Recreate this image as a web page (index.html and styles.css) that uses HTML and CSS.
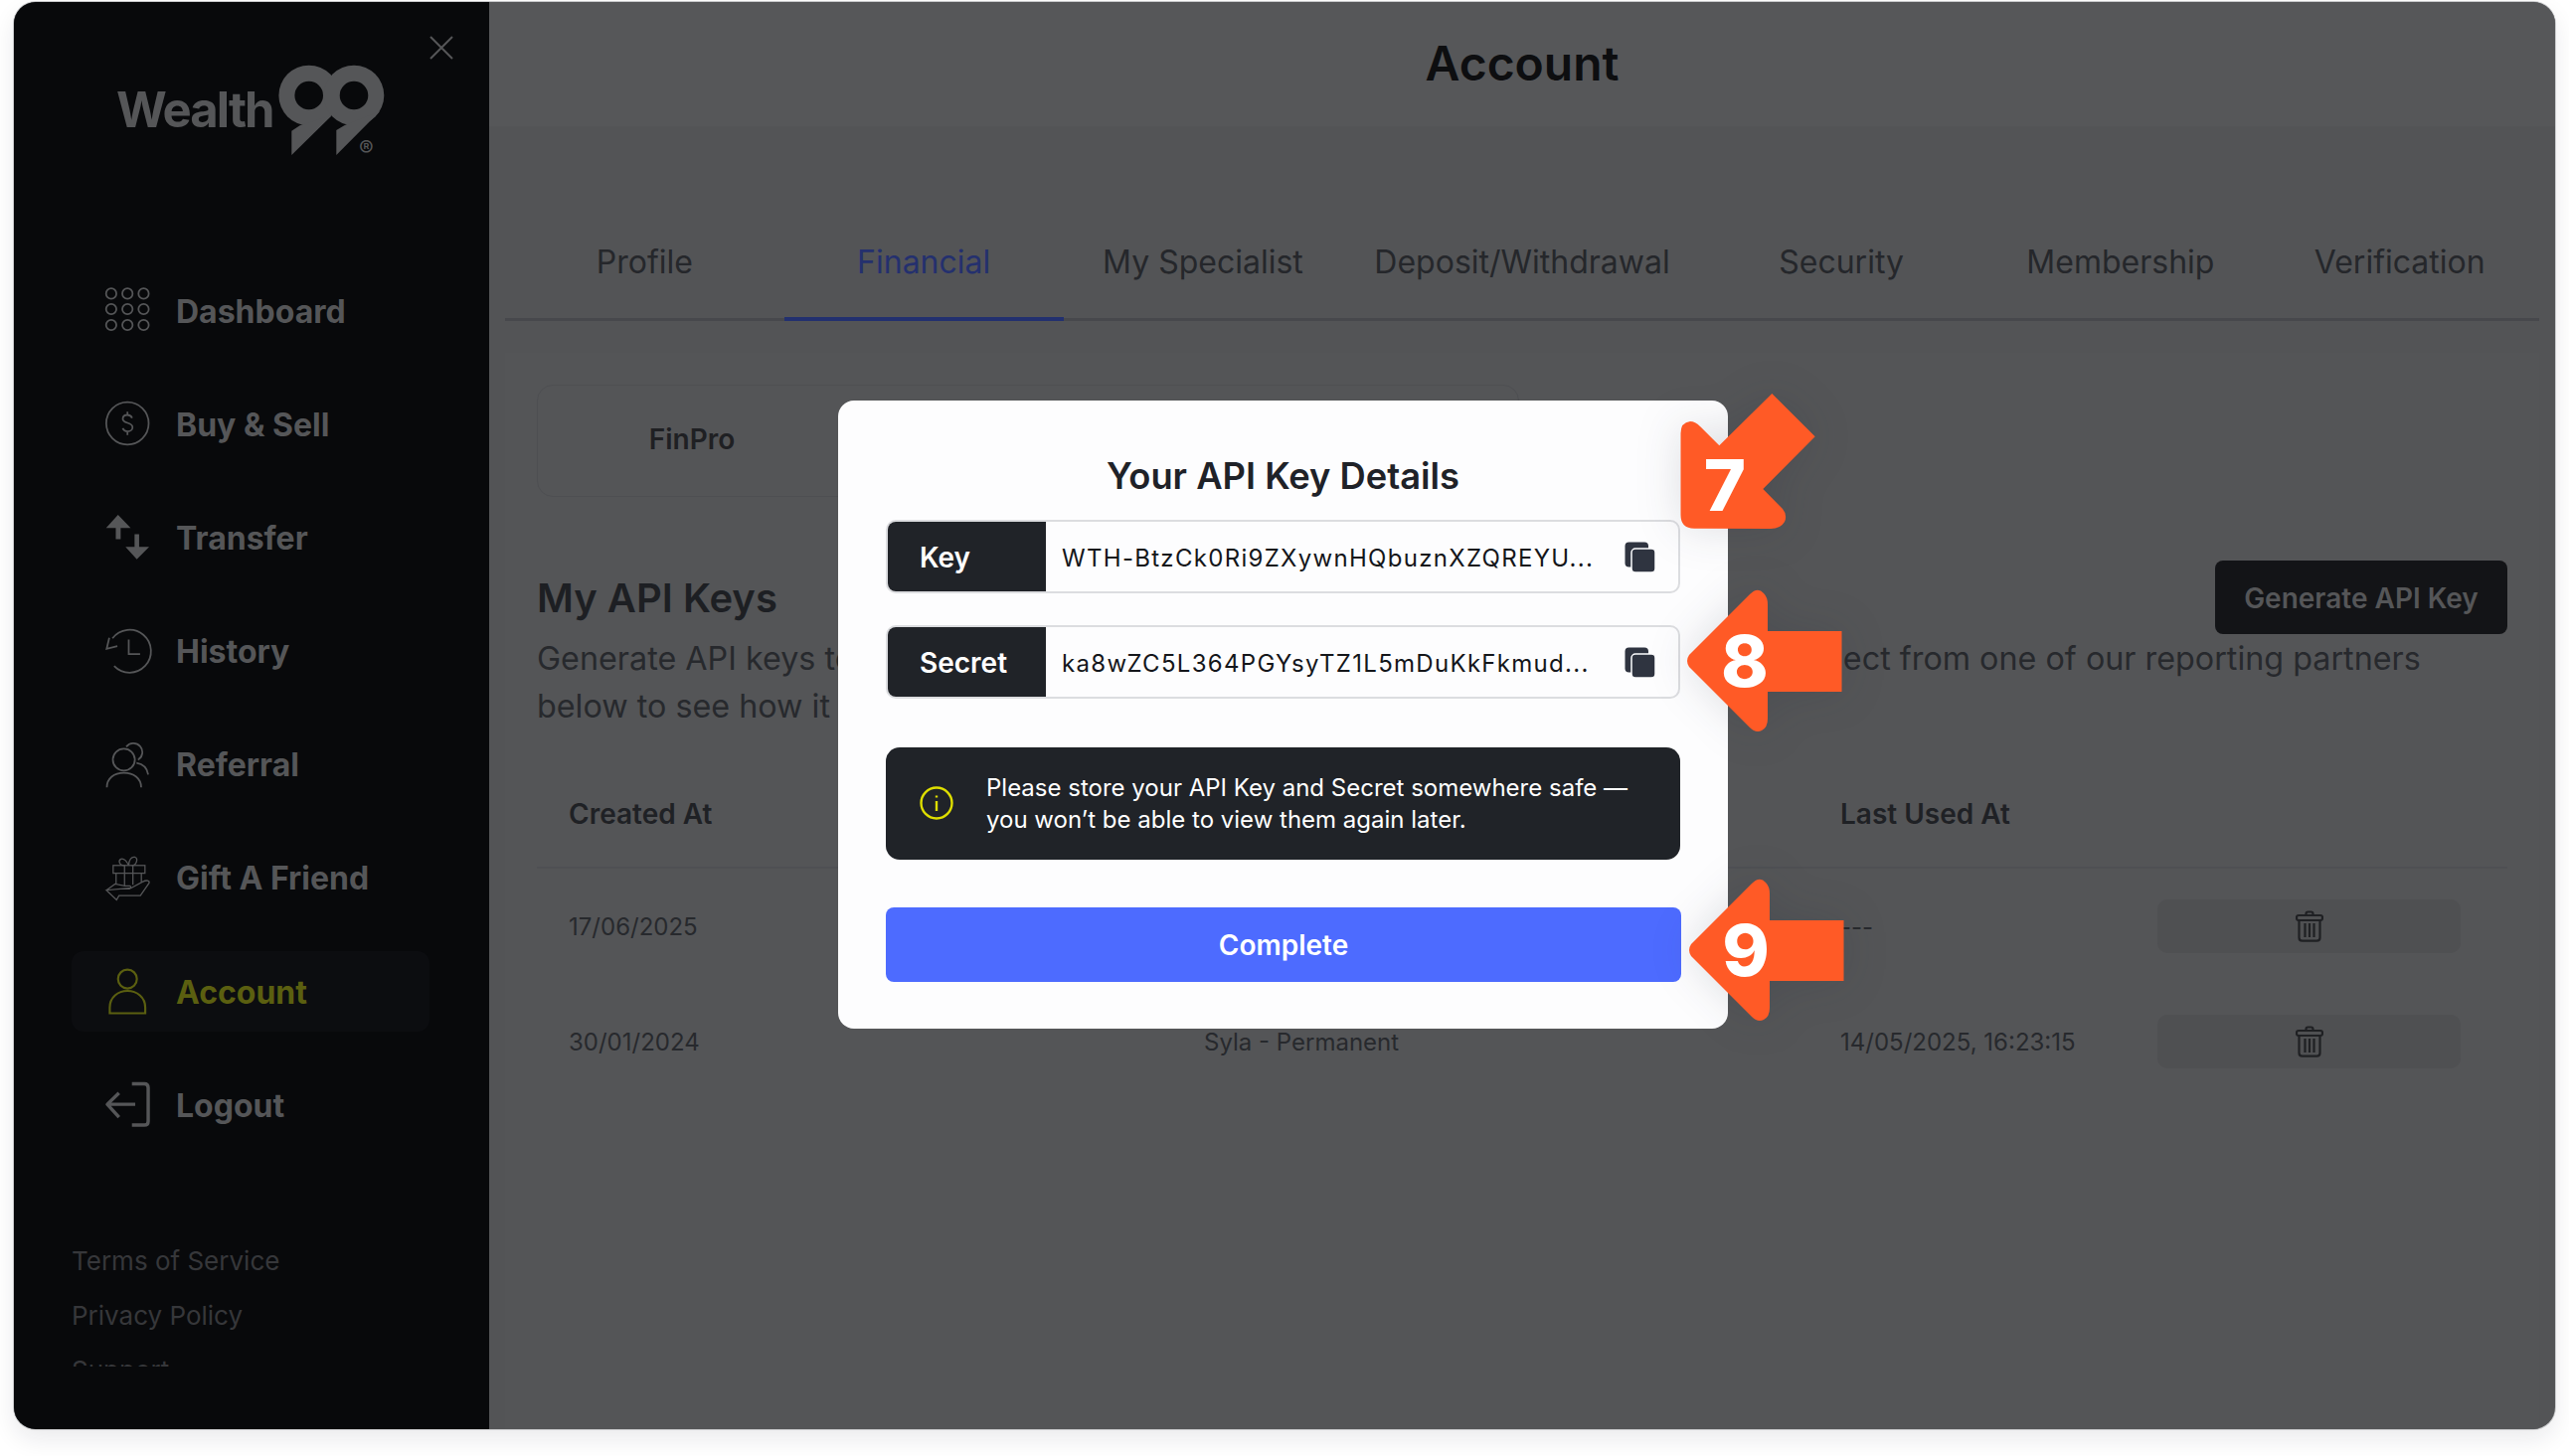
FILE: index.html
```html
<!DOCTYPE html>
<html lang="en">
<head>
<meta charset="utf-8">
<title>Account</title>
<link rel="stylesheet" href="styles.css">
</head>
<body>
<div class="stage">
  <div class="frame">
    <aside class="sidebar">
      <svg class="close" viewBox="0 0 24 24"><path d="M1 1L23 23M23 1L1 23"/></svg>
      <div class="logo">
        <span class="logo-word">Wealth</span>
        <svg class="logo-mark" viewBox="280 60 110 100">
          <circle class="m" cx="310.700" cy="96" r="30.300"/>
          <circle class="m" cx="356" cy="96" r="30.300"/>
          <path class="m" d="M302 126L293.300 131.700V156L334 116ZM346.700 126L338.300 131V156L382 112Z"/>
          <circle class="h" cx="310.700" cy="96" r="14.300"/>
          <circle class="h" cx="356" cy="96" r="14.300"/>
        </svg>
        <span class="logo-r">®</span>
      </div>
      <nav class="nav">
        <a class="nav-item"><svg class="ico" viewBox="0 0 46 46"><g class="s15"><circle cx="6" cy="5.500" r="5.300"/><circle cx="22.700" cy="5.500" r="5.300"/><circle cx="39.300" cy="5.500" r="5.300"/><circle cx="6" cy="21.500" r="5.300"/><circle cx="22.700" cy="21.500" r="5.300"/><circle cx="39.300" cy="21.500" r="5.300"/><circle cx="6" cy="37.800" r="5.300"/><circle cx="22.700" cy="37.800" r="5.300"/><circle cx="39.300" cy="37.800" r="5.300"/></g></svg><span>Dashboard</span></a>
        <a class="nav-item"><svg class="ico" viewBox="0 0 46 46"><g class="s15"><circle cx="22.700" cy="22.500" r="21.800"/><path d="M27.500 17c-.8-2-2.600-3.200-4.800-3.200-2.800 0-4.800 1.600-4.800 4 0 5.400 10 3 10 8.700 0 2.500-2.200 4.200-5 4.200-2.400 0-4.300-1.200-5.100-3.200M22.700 10.500v3.300M22.700 30.800v3.700"/></g></svg><span>Buy &amp; Sell</span></a>
        <a class="nav-item"><svg class="ico" viewBox="0 0 46 46"><path class="f" d="M.7 13.500L13 0L26 13.500H15.700V25H10.700V13.500ZM30 20H34.700V33H45L32.300 45.800L20.700 33H30Z"/></svg><span>Transfer</span></a>
        <a class="nav-item"><svg class="ico" viewBox="0 0 46 46"><g class="s15"><path d="M7.300 9.500A22 22 0 1 1 9 38"/><path d="M4 9L1.300 20.200L12.300 17.500"/><path d="M24 10.800V25.800H35.700"/></g></svg><span>History</span></a>
        <a class="nav-item"><svg class="ico" viewBox="0 0 46 46"><g class="s15"><circle cx="19" cy="17.800" r="11.300"/><path d="M21.500 4.500A9.200 9.200 0 1 1 33.500 18"/><path d="M1.500 46.200C1.500 37 9 31.200 19 31.200S36.800 37 36.800 46.200"/><path d="M32 21C38 22 43 26 44 33"/></g></svg><span>Referral</span></a>
        <a class="nav-item"><svg class="ico" viewBox="0 0 46 46"><g class="s12"><rect x="8" y="10" width="32.700" height="8"/><path d="M11 18V29M37 18V27M19.700 10V31M28.300 10V30"/><path d="M20 10C14 10 13 5 16 3.500C19 2.500 22 6 24 10C24 4 27 .5 30.500 1.500C34 3 32 10 27 10"/><path d="M1 35.500L10 29L20 31H25C26.500 31 26.500 34 25 34H18M27 33L38 27C43 24.500 45.500 25.500 45 28L36 41H14L11.500 45.500L1 35.500Z"/></g></svg><span>Gift A Friend</span></a>
        <a class="nav-item active"><svg class="ico" viewBox="0 0 46 46"><g class="s25"><circle cx="22.700" cy="10.300" r="9.700"/><path d="M4.500 45.500V39.500C4.500 29 13 22.500 22.700 22.500S41 29 41 39.500V45.500Z"/></g></svg><span>Account</span></a>
        <a class="nav-item"><svg class="ico" viewBox="0 0 46 46"><g class="s3"><path d="M30.700 22.600H3M14 11L2 22.600L14 36"/><path d="M27.300 1.500H40Q44 1.500 44 5.500V40Q44 44 40 44H27.300"/></g></svg><span>Logout</span></a>
      </nav>
      <div class="links">
        <a>Terms of Service</a>
        <a>Privacy Policy</a>
        <a>Support</a>
      </div>
    </aside>
    <main class="main">
      <header class="top"><h1>Account</h1></header>
      <div class="tabs">
        <a class="tab">Profile</a>
        <a class="tab on">Financial</a>
        <a class="tab">My Specialist</a>
        <a class="tab">Deposit/Withdrawal</a>
        <a class="tab">Security</a>
        <a class="tab">Membership</a>
        <a class="tab">Verification</a>
      </div>
      <section class="panel">
        <div class="partners"><div class="partner">FinPro</div></div>
        <div class="api-head">
          <h2>My API Keys</h2>
          <button class="gen">Generate API Key</button>
        </div>
        <p class="desc">Generate API keys to connect your account with third-party tax and portfolio tools. Select from one of our reporting partners<br>below to see how it works.</p>
        <div class="table">
          <div class="row head"><span>Created At</span><span>Name</span><span>Last Used At</span><span></span></div>
          <div class="row">
            <span>17/06/2025</span><span>FinPro - Permanent</span><span>---</span>
            <button class="del"><svg class="trash" viewBox="0 0 28 32"><use href="#trash-shape"/></svg></button>
          </div>
          <div class="row">
            <span>30/01/2024</span><span>Syla - Permanent</span><span>14/05/2025, 16:23:15</span>
            <button class="del"><svg class="trash" viewBox="0 0 28 32"><use href="#trash-shape"/></svg></button>
          </div>
        </div>
      </section>
    </main>
  </div>

  <div class="modal">
    <h3>Your API Key Details</h3>
    <div class="field">
      <div class="field-label">Key</div>
      <div class="field-value">WTH-BtzCk0Ri9ZXywnHQbuznXZQREYU...</div>
      <svg class="copy" viewBox="0 0 31 31"><use href="#copy-shape"/></svg>
    </div>
    <div class="field second">
      <div class="field-label">Secret</div>
      <div class="field-value">ka8wZC5L364PGYsyTZ1L5mDuKkFkmud...</div>
      <svg class="copy" viewBox="0 0 31 31"><use href="#copy-shape"/></svg>
    </div>
    <div class="notice">
      <svg class="info" viewBox="0 0 34 34"><circle cx="17" cy="17" r="15.500"/><path d="M17 15V25M17 9.500V11.500"/></svg>
      <p>Please store your API Key and Secret somewhere safe —<br>you won’t be able to view them again later.</p>
    </div>
    <button class="complete">Complete</button>
  </div>

  <div class="callout c7">
    <svg viewBox="1680 390 160 150"><path d="M1690.500 436Q1690.500 425 1700 424Q1705 424 1710 429L1729.300 448.300L1782.300 396L1825.700 439.300L1773.300 492L1793 512Q1798 518 1795 525Q1791 532 1781 532L1704 531.700Q1690.500 531.700 1690.500 518Z"/></svg>
    <span class="digit d7">7</span>
  </div>
  <div class="callout c8">
    <svg viewBox="1690 585 170 160"><path d="M1760 598Q1768 590 1774 597Q1778 601 1778 608V635H1852.500V696H1778V723Q1778 732 1772 735Q1766 738 1760 732L1699 671Q1695 665 1699 659Z"/></svg>
    <span class="digit d8">8</span>
  </div>
  <div class="callout c9">
    <svg viewBox="1690 585 170 160"><path d="M1760 598Q1768 590 1774 597Q1778 601 1778 608V635H1852.500V696H1778V723Q1778 732 1772 735Q1766 738 1760 732L1699 671Q1695 665 1699 659Z"/></svg>
    <span class="digit d9">9</span>
  </div>

  <svg class="defs" aria-hidden="true">
    <defs>
      <g id="trash-shape" fill="none" stroke="#1f2023" stroke-width="2.200">
        <path d="M10.500 5V3.500Q10.500 1.500 12.500 1.500H15.500Q17.500 1.500 17.500 3.500V5"/>
        <rect x="1" y="5" width="26" height="5" rx="2"/>
        <path d="M3.500 10V27.500Q3.500 30.700 6.700 30.700H21.300Q24.500 30.700 24.500 27.500V10"/>
        <path d="M9.500 13V27M14 13V27M18.500 13V27"/>
      </g>
      <g id="copy-shape">
        <rect x=".5" y=".5" width="23.500" height="25" rx="4" fill="#2f3440"/>
        <rect x="7" y="7" width="24" height="24" rx="4" fill="#2f3440" stroke="#fdfdfe" stroke-width="1.500"/>
      </g>
    </defs>
  </svg>
</div>
</body>
</html>
```

FILE: styles.css
```css
* { box-sizing: border-box; }
html, body { margin: 0; padding: 0; background: #fff; }
body { font-family: Inter, "Liberation Sans", sans-serif; overflow: hidden; }
h1, h2, h3, p { margin: 0; }
button { font-family: inherit; border: 0; padding: 0; }

.stage { position: relative; width: 2584px; height: 1465px; padding: 2px 14px 27px; }
.frame {
  display: flex; height: 100%; overflow: hidden; border-radius: 22px;
  background: #535456;
  box-shadow: 0 0 0 1px #c9cacc, 0 10px 24px rgba(20, 24, 40, .09);
}

/* sidebar */
.sidebar { position: relative; flex: 0 0 478px; background: #08090b; color: #555658; }
.close { position: absolute; left: 418px; top: 34px; width: 24px; height: 24px; }
.close path { stroke: #555658; stroke-width: 2; fill: none; }
.logo { display: flex; align-items: flex-start; height: 100px; margin: 58px 0 0 103px; position: relative; }
.logo-word { width: 163px; margin-top: 27px; font-size: 49px; line-height: 48px; font-weight: 700; letter-spacing: -1.900px; color: #555658; }
.logo-mark { width: 110px; height: 100px; }
.logo-mark .m { fill: #555658; }
.logo-mark .h { fill: #08090b; }
.logo-r { position: absolute; left: 244px; top: 77px; font-size: 22px; line-height: 24px; color: #555658; }

.nav { display: flex; flex-direction: column; gap: 33.200px; margin: 112px 0 0 58px; width: 360px; }
.nav-item { display: flex; align-items: center; gap: 26px; height: 81px; padding-left: 34px; border-radius: 12px; font-size: 32px; font-weight: 700; color: #555658; }
.nav-item span { padding-top: 1px; }
.nav-item.active { background: #0c0d10; color: #5b5f10; }
.ico { flex: 0 0 45px; width: 45px; height: 45px; overflow: visible; }
.ico .f { fill: #555658; }
.s12, .s15, .s25, .s3 { fill: none; stroke: #555658; }
.s12 { stroke-width: 1.300; }
.s15 { stroke-width: 1.800; }
.s25 { stroke-width: 2.200; stroke: #5b5f10; }
.s3 { stroke-width: 3.500; stroke-linejoin: round; }

.links { height: 134.500px; margin: 88.500px 0 0 58px; overflow: hidden; font-size: 26px; color: #36373a; }
.links a { display: block; height: 55px; line-height: 55px; }

/* main */
.main { flex: 1; min-width: 0; display: flex; flex-direction: column; }
.top { height: 125px; display: flex; align-items: center; justify-content: center; background: #565759; }
h1 { font-size: 48px; line-height: 56px; margin-top: -2px; font-weight: 600; color: #0d0e10; }
.tabs { display: flex; height: 108px; margin: 88px 16px 0; border-bottom: 3px solid #47484c; }
.tab { flex: 1 1 0; height: 108px; padding: 0 32px; line-height: 98px; text-align: center; font-size: 32px; color: #25272b; white-space: nowrap; }
.tab.on { color: #24306e; border-bottom: 4px solid #22306f; }
.panel { flex: 1; margin: 32px 16px 0; padding: 32px 32px 0 32px; background: #545557; }
.partners { width: 988px; height: 113px; border: 1px solid #4e4f52; border-radius: 16px; }
.partner { width: 310px; line-height: 109px; text-align: center; font-size: 28px; font-weight: 600; color: #1f2023; }
.api-head { display: flex; align-items: center; justify-content: space-between; height: 74px; margin-top: 64px; }
h2 { font-size: 40px; font-weight: 600; color: #1d1f23; }
.gen { width: 294px; height: 74px; padding-top: 2px; border-radius: 8px; background: #131417; color: #555658; font-size: 28px; font-weight: 600; }
.desc { padding-top: 1px; font-size: 32.300px; line-height: 48px; color: #27292d; white-space: nowrap; }
.table { margin-top: 29px; color: #27292d; font-size: 24px; }
.row { display: grid; grid-template-columns: 639px 640px 319px 305px; align-items: center; height: 116px; padding-left: 32px; }
.row.head { height: 110px; padding-top: 1px; font-size: 28px; font-weight: 600; color: #1f2125; border-bottom: 2px solid #4f5053; }
.del { display: flex; align-items: center; justify-content: center; height: 54px; background: #4f5052; border-radius: 10px; }
.trash { width: 28px; height: 32px; }

/* modal */
.modal { position: absolute; left: 843px; top: 403px; width: 895px; height: 632px; padding: 49px 48px 0 48px; background: #fdfdfe; border-radius: 16px; }
h3 { height: 54px; line-height: 55px; text-align: center; font-size: 36.300px; font-weight: 600; color: #1f2228; }
.field { display: flex; align-items: center; height: 74px; margin-top: 17px; border: 2px solid #dcdde0; border-radius: 10px; overflow: hidden; }
.field.second { margin-top: 32px; }
.field-label { display: flex; align-items: center; flex: 0 0 159px; height: 100%; padding: 2px 0 0 32px; background: #202328; color: #fff; font-size: 28px; font-weight: 600; }
.field-value { flex: 1; min-width: 0; padding: 2px 0 0 16px; font-size: 24px; letter-spacing: 1.300px; color: #14161a; white-space: nowrap; }
.copy { flex: 0 0 31px; width: 31px; height: 31px; margin-right: 23px; }
.notice { display: flex; align-items: center; height: 113px; margin-top: 49px; padding-left: 34px; border-radius: 14px; background: #202328; color: #fff; }
.info { flex: 0 0 34px; width: 34px; height: 34px; margin: -2px 33px 0 0; }
.info circle, .info path { fill: none; stroke: #dede00; stroke-width: 2.400; }
.notice p { padding-top: 1px; font-size: 24px; line-height: 32px; white-space: nowrap; }
.complete { display: block; width: 800px; height: 75px; margin-top: 48px; border-radius: 8px; background: #4d6bff; color: #fff; font-size: 28px; font-weight: 600; }

/* callouts */
.callout { position: absolute; }
.callout svg { display: block; width: 100%; height: 100%; overflow: visible; filter: drop-shadow(0 0 22px rgba(30, 34, 60, .14)); }
.callout path { fill: #ff5a26; }
.c7 { left: 1680px; top: 390px; width: 160px; height: 150px; }
.c8 { left: 1690px; top: 585px; width: 170px; height: 160px; }
.c9 { left: 1692px; top: 876px; width: 170px; height: 160px; }
.digit { position: absolute; width: 80px; text-align: center; font-size: 72px; line-height: 80px; font-weight: 800; color: #fff; }
.d7 { left: 15px; top: 58px; }
.d8 { left: 25px; top: 40px; }
.d9 { left: 24px; top: 40px; }

.defs { position: absolute; width: 0; height: 0; }
```
